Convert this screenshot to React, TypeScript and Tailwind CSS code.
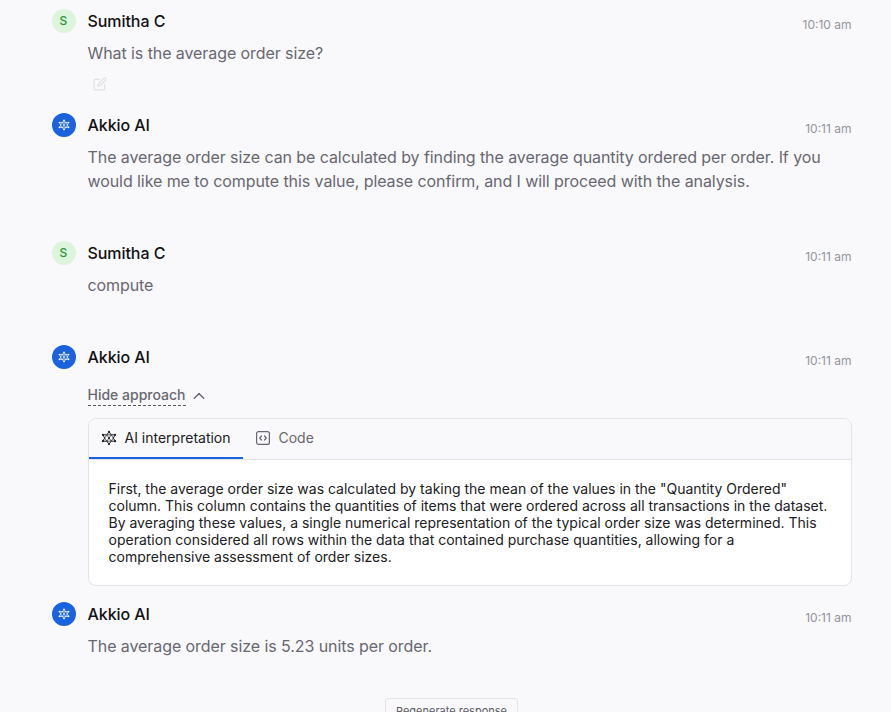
import React from 'react';

function Logo({ className }: { className: string }) {
  return (
    <svg viewBox="0 0 16 16" className={className} fill="none" stroke="currentColor" strokeWidth="1">
      <path d="M8 1.8 L10.2 4.8 L14.2 4.8 L12.3 8 L14.2 11.2 L10.2 11.2 L8 14.2 L5.8 11.2 L1.8 11.2 L3.7 8 L1.8 4.8 L5.8 4.8 Z" />
      <path d="M5.8 4.8 L10.2 11.2 M10.2 4.8 L5.8 11.2 M5.8 4.8 H10.2 L12.3 8 L10.2 11.2 H5.8 L3.7 8 Z" strokeWidth="0.7" />
      <g fill="currentColor" stroke="none">
        <circle cx="8" cy="1.9" r="1.1" />
        <circle cx="8" cy="14.1" r="1.1" />
        <circle cx="1.9" cy="4.8" r="1.1" />
        <circle cx="14.1" cy="4.8" r="1.1" />
        <circle cx="1.9" cy="11.2" r="1.1" />
        <circle cx="14.1" cy="11.2" r="1.1" />
        <circle cx="8" cy="8" r="1" />
      </g>
    </svg>
  );
}

type MessageProps = {
  ai?: boolean;
  time: string;
  className: string;
  children: React.ReactNode;
};

function Message({ ai = false, time, className, children }: MessageProps) {
  return (
    <article className={`flex ${className}`}>
      {ai ? (
        <div className="mr-[11.5px] flex size-6 shrink-0 items-center justify-center rounded-full bg-[#1b62e0] text-white">
          <Logo className="size-3" />
        </div>
      ) : (
        <div className="mr-[11.5px] flex size-6 shrink-0 items-center justify-center rounded-full bg-[#dcf5dc] pr-px text-xs font-medium text-[#2f9437]">
          S
        </div>
      )}
      <div className="min-w-0 flex-1">
        <header className="flex h-6 justify-between">
          <h2 className="text-base font-medium tracking-[-0.06px] text-[#111113]">{ai ? 'Akkio AI' : 'Sumitha C'}</h2>
          <time className="pt-[7px] pr-[0.5px] text-xs leading-[18px] text-[#94949d]">{time}</time>
        </header>
        {children}
      </div>
    </article>
  );
}

function Body({ children }: { children: React.ReactNode }) {
  return <p className="mt-2 text-base tracking-[-0.08px] whitespace-nowrap text-[#686771]">{children}</p>;
}

export default function App() {
  return (
    <main className="h-[712px] overflow-hidden bg-[#f9f9fb] pt-[9px] pr-[39px] pl-[52px] font-['Inter',sans-serif]">
      <Message time="10:10 am" className="h-[104px]">
        <Body>What is the average order size?</Body>
        <svg viewBox="0 0 24 24" className="mt-3 ml-[5.5px] size-3.5 text-[#e1e1e5]" fill="none" stroke="currentColor" strokeWidth="2" strokeLinecap="round" strokeLinejoin="round">
          <path d="M11 4H4a2 2 0 0 0-2 2v14a2 2 0 0 0 2 2h14a2 2 0 0 0 2-2v-7" />
          <path d="M18.5 2.5a2.12 2.12 0 0 1 3 3L12 15l-4 1 1-4Z" />
        </svg>
      </Message>
      <Message ai time="10:11 am" className="h-32">
        <Body>
          The average order size can be calculated by finding the average quantity ordered per order. If you
          <br />
          would like me to compute this value, please confirm, and I will proceed with the analysis.
        </Body>
      </Message>
      <Message time="10:11 am" className="h-[104px]">
        <Body>compute</Body>
      </Message>
      <Message ai time="10:11 am" className="h-[257px]">
        <button className="mt-4 flex h-6 items-start text-sm font-medium text-[#686771]">
          <span className="box-content h-5 border-b border-dashed border-[#55555e] leading-[19px]">Hide approach</span>
          <svg viewBox="0 0 14 14" className="mt-1 ml-1.5 size-3.5" fill="none" stroke="currentColor" strokeWidth="1.4" strokeLinecap="round" strokeLinejoin="round">
            <path d="M2.3 9.3 7 4.5l4.7 4.8" />
          </svg>
        </button>
        <section className="mt-[9px] ml-[0.5px] h-[168px] overflow-hidden rounded-lg border border-[#e4e4e8] bg-white">
          <div className="flex h-[41px] border-b border-[#e4e4e8] bg-[#f9f9fb] text-sm">
            <button className="flex h-10 w-[154px] items-center border-b-2 border-[#1b62e0] pl-3 text-[#202024]">
              <Logo className="mr-[7.5px] size-4" />
              AI interpretation
            </button>
            <button className="ml-3 flex h-[38px] items-center text-[#686771]">
              <svg viewBox="0 0 16 16" className="mr-[7.5px] size-4" fill="none" stroke="currentColor" strokeWidth="1.2" strokeLinecap="round" strokeLinejoin="round">
                <rect x="1.6" y="1.6" width="12.8" height="12.8" rx="2" />
                <path d="M6.5 6 4.7 8l1.8 2M9.5 6l1.8 2-1.8 2" />
              </svg>
              Code
            </button>
          </div>
          <p className="pt-5 pl-[19.5px] text-sm leading-[17px] whitespace-nowrap text-[#202024]">
            First, the average order size was calculated by taking the mean of the values in the "Quantity Ordered"
            <br />
            column. This column contains the quantities of items that were ordered across all transactions in the dataset.
            <br />
            By averaging these values, a single numerical representation of the typical order size was determined. This
            <br />
            operation considered all rows within the data that contained purchase quantities, allowing for a
            <br />
            comprehensive assessment of order sizes.
          </p>
        </section>
      </Message>
      <Message ai time="10:11 am" className="h-24">
        <Body>The average order size is 5.23 units per order.</Body>
      </Message>
      <button className="flex ml-[333px] h-[28px] w-[133px] items-start justify-center rounded-[3px] border border-[#e4e4e8] pt-[5px] text-[11px] leading-[14px] whitespace-nowrap text-[#5b5b63]">
        Regenerate response
      </button>
    </main>
  );
}
